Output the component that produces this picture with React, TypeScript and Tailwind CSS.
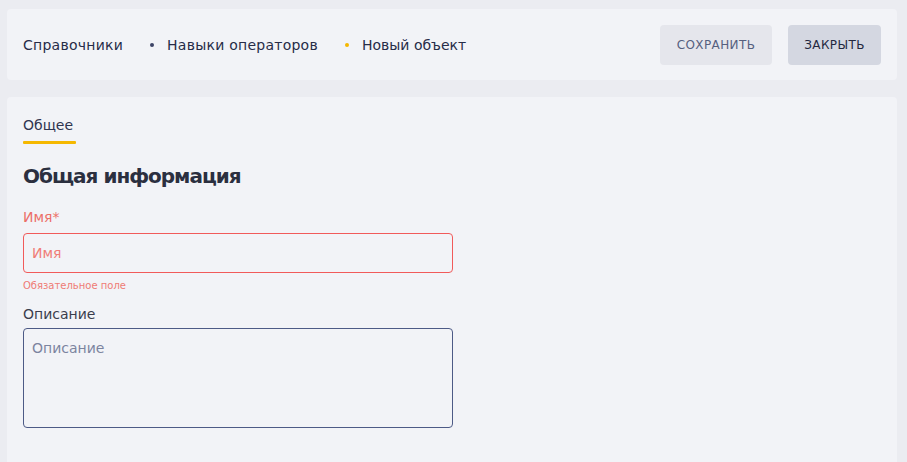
import React from "react";

export default function App() {
  return (
    <div
      className="w-[907px] h-[462px] overflow-hidden bg-[#ebecf1] pl-[7px] pr-[10px] pt-[9px] flex flex-col gap-[17px]"
      style={{ fontFamily: '"DejaVu Sans", "Noto Sans", sans-serif' }}
    >
      <div className="h-[71px] bg-[#f2f3f7] rounded-[4px] flex items-center pl-[16px] pr-[16px]">
        <div className="flex items-center text-[14px] text-[#272c48] tracking-[0.25px] pt-[1px]">
          <span>Справочники</span>
          <span className="w-[4px] h-[4px] rounded-full bg-[#3d4466] ml-[27px] mr-[13px]" />
          <span>Навыки операторов</span>
          <span className="w-[4px] h-[4px] rounded-full bg-[#f5b800] ml-[27px] mr-[13px]" />
          <span className="tracking-[0px]">Новый объект</span>
        </div>
        <div className="ml-auto flex items-center gap-[16px]">
          <button className="h-[40px] w-[112px] rounded-[4px] bg-[#e5e6ec] text-[12px] text-[#56607f] tracking-[0.4px]">
            СОХРАНИТЬ
          </button>
          <button className="h-[40px] w-[93px] rounded-[4px] bg-[#d4d7e1] text-[12px] text-[#23283f] tracking-[0.4px]">
            ЗАКРЫТЬ
          </button>
        </div>
      </div>
      <div className="flex-1 bg-[#f2f3f7] rounded-t-[4px] px-[16px] pt-[16px]">
        <div className="inline-flex flex-col">
          <span className="text-[14px] text-[#2f3550] leading-[20px]">Общее</span>
          <span className="mt-[6px] h-[3px] w-[53px] bg-[#f5b800] rounded-[1px]" />
        </div>
        <h2 className="mt-[18px] text-[20px] font-bold text-[#2b2f3f] leading-[28px] tracking-[-1px]">Общая информация</h2>
        <div className="mt-[17px] w-[430px]">
          <div className="text-[14px] text-[#ec6f69] leading-[20px]">Имя*</div>
          <input
            placeholder="Имя"
            className="mt-[6px] w-full h-[40px] rounded-[4px] border border-[#f15a5a] bg-transparent px-[8px] text-[14px] outline-none placeholder:text-[#f07d77]"
          />
          <div className="mt-[6px] text-[10px] text-[#ef7b75] leading-[14px]">Обязательное поле</div>
          <div className="mt-[11px] text-[14px] text-[#3a3d4d] leading-[20px]">Описание</div>
          <textarea
            placeholder="Описание"
            className="mt-[4px] block w-full h-[100px] rounded-[4px] border border-[#4d5a86] bg-transparent px-[8px] py-[9px] text-[14px] outline-none resize-none placeholder:text-[#7c849f]"
          />
        </div>
      </div>
    </div>
  );
}
